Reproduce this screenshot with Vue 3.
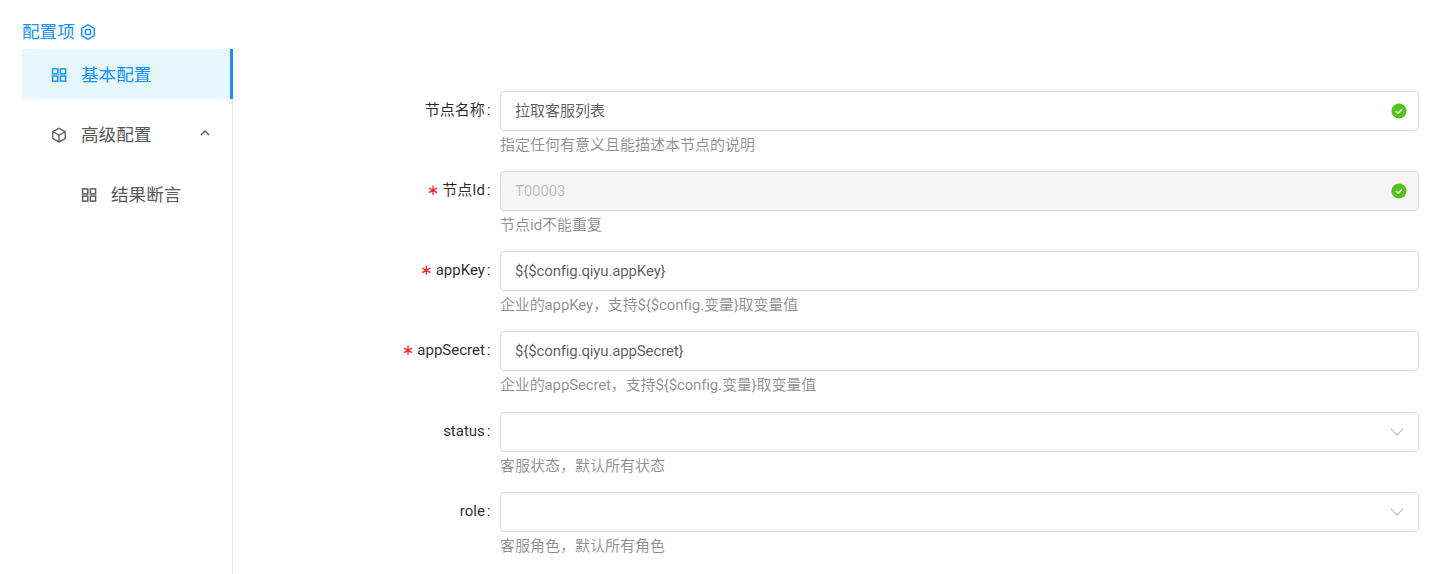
<script setup>
const comma = '\uFF0C'
const fields = [
  { label: '节点名称', value: '拉取客服列表', help: '指定任何有意义且能描述本节点的说明', ok: true },
  { label: '节点Id', value: 'T00003', latin: true, help: '节点id不能重复', required: true, ok: true, disabled: true },
  { label: 'appKey', value: '${$config.qiyu.appKey}', latin: true, tightHelp: true, help: '企业的appKey' + comma + '支持${$config.变量}取变量值', required: true },
  { label: 'appSecret', value: '${$config.qiyu.appSecret}', latin: true, tightHelp: true, help: '企业的appSecret' + comma + '支持${$config.变量}取变量值', required: true },
  { label: 'status', value: '', help: '客服状态' + comma + '默认所有状态', select: true },
  { label: 'role', value: '', help: '客服角色' + comma + '默认所有角色', select: true },
]
</script>

<template>
  <div class="page">
    <aside class="side">
      <div class="side-title">
        <span>配置项</span>
        <svg class="hex" width="16" height="16" viewBox="0 0 16 16" fill="none" stroke="currentColor" stroke-width="1.5">
          <path d="M8 .8 14.3 4.4v7.2L8 15.2 1.7 11.6V4.4Z" />
          <circle cx="8" cy="8" r="2.8" />
        </svg>
      </div>
      <nav class="menu">
        <div class="item active">
          <svg class="ico" width="16" height="16" viewBox="0 0 16 16" fill="none" stroke="currentColor" stroke-width="1.5">
            <rect x="1.6" y="1.9" width="5.2" height="5" /><rect x="9.4" y="1.9" width="5.2" height="5" />
            <rect x="1.6" y="9.1" width="5.2" height="5" /><rect x="9.4" y="9.1" width="5.2" height="5" />
          </svg>
          <span class="txt">基本配置</span>
        </div>
        <div class="item">
          <svg class="ico" width="16" height="16" viewBox="0 0 16 16" fill="none" stroke="currentColor" stroke-width="1.3">
            <path d="M8 1.3 14.2 4.7v6.8L8 14.9 1.8 11.5V4.7Z" />
            <path d="M1.8 4.7 8 8.1l6.2-3.4M8 8.1v6.8" />
          </svg>
          <span class="txt">高级配置</span>
          <svg class="arrow" width="10" height="10" viewBox="0 0 10 10" fill="none" stroke="currentColor" stroke-width="1.4">
            <path d="M1 7 5 3l4 4" />
          </svg>
        </div>
        <div class="item sub">
          <svg class="ico" width="16" height="16" viewBox="0 0 16 16" fill="none" stroke="currentColor" stroke-width="1.5">
            <rect x="1.6" y="1.9" width="5.2" height="5" /><rect x="9.4" y="1.9" width="5.2" height="5" />
            <rect x="1.6" y="9.1" width="5.2" height="5" /><rect x="9.4" y="9.1" width="5.2" height="5" />
          </svg>
          <span class="txt">结果断言</span>
        </div>
      </nav>
    </aside>

    <main class="form">
      <div v-for="f in fields" :key="f.label" class="row">
        <label class="label">
          <span v-if="f.required" class="star">&#x2217;</span>{{ f.label }}<span class="colon">:</span>
        </label>
        <div class="control">
          <div class="input" :class="{ disabled: f.disabled }">
            <span :class="{ latin: f.latin }">{{ f.value }}</span>
            <svg v-if="f.ok" width="16" height="16" viewBox="0 0 16 16">
              <circle cx="8" cy="8" r="7.6" fill="#52c41a" />
              <path d="M4.9 8.1 7.1 10.2 11.1 6" fill="none" stroke="#fff" stroke-width="1.4" />
            </svg>
            <svg v-if="f.select" class="chev" width="14" height="14" viewBox="0 0 14 14" fill="none" stroke="#bfbfbf" stroke-width="1.2">
              <path d="M1 3.6 7 10.4 13 3.6" />
            </svg>
          </div>
          <div class="help" :class="{ latin: f.tightHelp }">{{ f.help }}</div>
        </div>
      </div>
    </main>
  </div>
</template>

<style>
html, body { margin: 0; background: #fff; }
</style>

<style scoped>
.page {
  display: flex;
  height: 574px;
  overflow: hidden;
  font-family: Roboto, "Noto Sans CJK SC", sans-serif;
  font-size: 15px;
  color: rgba(0, 0, 0, 0.65);
}
.side {
  width: 211px;
  margin-left: 22px;
  flex: none;
  display: flex;
  flex-direction: column;
}
.side-title {
  height: 49px;
  padding-top: 14px;
  box-sizing: border-box;
  display: flex;
  align-items: center;
  gap: 5px;
  font-size: 17.6px;
  line-height: 22px;
  color: #1890ff;
}
.menu {
  flex: 1;
  border-right: 1px solid #e8e8e8;
  font-size: 17.6px;
}
.item {
  height: 50px;
  margin-bottom: 10px;
  margin-right: -1px;
  padding-left: 29px;
  display: flex;
  align-items: center;
  gap: 14px;
  color: #595959;
}
.item.sub { padding-left: 59px; }
.item.active {
  background: #e6f7ff;
  color: #1890ff;
  border-right: 3px solid #1890ff;
}
.ico { flex: none; margin-top: 2px; }
.txt { margin-top: -2px; }
.arrow { margin-left: auto; margin-right: 23px; margin-top: -2px; }
.form {
  flex: 1;
  padding: 91px 33px 0 0;
  min-width: 0;
}
.row {
  display: grid;
  grid-template-columns: 267px 1fr;
  height: 80.15px;
}
.label {
  line-height: 38px;
  text-align: right;
  color: rgba(0, 0, 0, 0.85);
  padding-right: 9.5px;
  white-space: nowrap;
}
.star {
  color: #f5222d;
  margin-right: 3px;
  font-family: "DejaVu Sans", sans-serif;
}
.colon { margin-left: 2px; }
.input {
  height: 40px;
  box-sizing: border-box;
  border: 1px solid #d9d9d9;
  border-radius: 4px;
  padding: 0 11px 0 14px;
  display: flex;
  align-items: center;
  justify-content: space-between;
  line-height: 38px;
}
.latin { letter-spacing: -0.14px; }
.input.disabled {
  background: #f5f5f5;
  color: rgba(0, 0, 0, 0.25);
}
.chev { margin-right: 3px; margin-top: 1px; }
.help {
  margin-top: 4px;
  line-height: 21px;
  color: rgba(0, 0, 0, 0.45);
  white-space: nowrap;
}
</style>
